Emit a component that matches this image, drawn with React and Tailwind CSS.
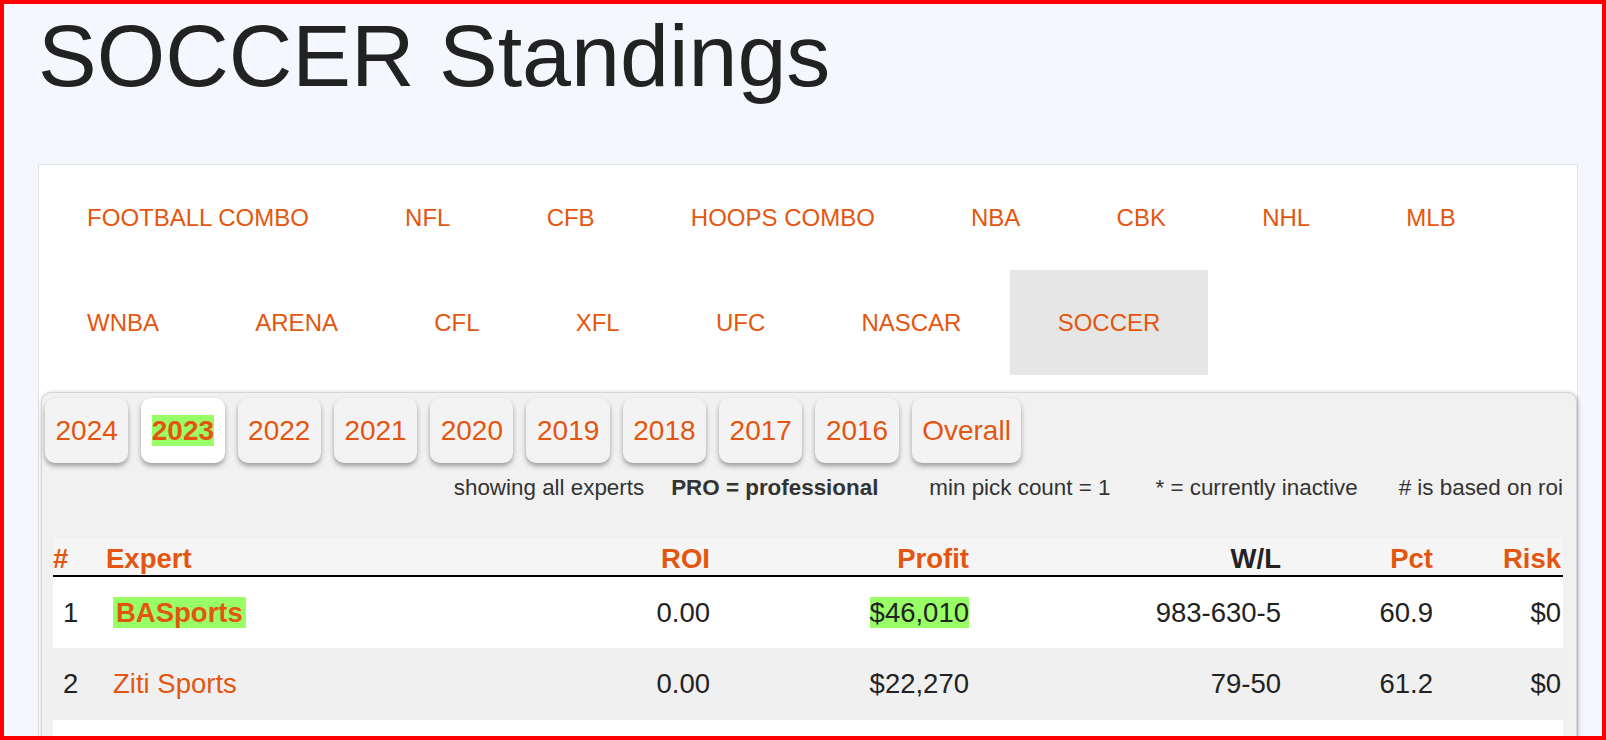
import React from "react";

const sports = [
  "FOOTBALL COMBO",
  "NFL",
  "CFB",
  "HOOPS COMBO",
  "NBA",
  "CBK",
  "NHL",
  "MLB",
  "WNBA",
  "ARENA",
  "CFL",
  "XFL",
  "UFC",
  "NASCAR",
  "SOCCER",
];

const years = ["2024", "2023", "2022", "2021", "2020", "2019", "2018", "2017", "2016", "Overall"];

const experts = [
  { rank: 1, name: "BASports", roi: "0.00", profit: "$46,010", wl: "983-630-5", pct: "60.9", risk: "$0", leader: true },
  { rank: 2, name: "Ziti Sports", roi: "0.00", profit: "$22,270", wl: "79-50", pct: "61.2", risk: "$0" },
];

const cols = "grid grid-cols-[51px_456px_150px_259px_312px_152px_129px]";

const App = () => {
  return (
    <div className="h-[740px] overflow-hidden border-4 border-[#ff0000] bg-[#f4f7fe] font-['Liberation_Sans',Arial,sans-serif] text-[#222]">
      {/* Title */}
      <h1 className="mt-[8px] ml-[34px] h-[88px] text-[88px] leading-[88px] font-normal">SOCCER Standings</h1>

      {/* Sports box */}
      <div className="mt-[64px] ml-[34px] w-[1540px] border border-[#e3e3e3] bg-white">
        <div className="flex flex-wrap pb-[17px]">
          {sports.map((s) => (
            <a
              key={s}
              className={`flex h-[105px] items-center px-[48.1px] text-[24px] text-[#e4560f] ${
                s === "SOCCER" ? "bg-[#e6e6e6]" : ""
              }`}
            >
              {s}
            </a>
          ))}
        </div>

        {/* Standings panel */}
        <div className="ml-[2px] rounded-t-[10px] border border-[#d6d6d6] bg-[#f1f1f1] pb-[40px] shadow-[1px_1px_4px_rgba(0,0,0,0.3)]">
          <div className="flex gap-[13px] pl-[3px] pt-[5px]">
            {years.map((y) => (
              <button
                key={y}
                className={`h-[65px] rounded-[10px] px-[10.5px] text-[28px] text-[#e4560f] shadow-[0_3px_5px_rgba(0,0,0,0.35)] ${
                  y === "2023" ? "bg-white font-bold" : "bg-[#f3f3f3]"
                }`}
              >
                {y === "2023" ? <span className="bg-[#99ff66]">{y}</span> : y}
              </button>
            ))}
          </div>

          {/* Legend */}
          <div className="mt-[12px] flex justify-end pr-[13px] text-[22.4px] leading-[25px] text-[#333]">
            <span>showing all experts</span>
            <span className="ml-[27px] font-bold">PRO = professional</span>
            <span className="ml-[51px]">min pick count = 1</span>
            <span className="ml-[45px]">* = currently inactive</span>
            <span className="ml-[41px]"># is based on roi</span>
          </div>

          {/* Table */}
          <div className="mt-[38px] ml-[11px] mr-[13px] text-[27.5px]">
            <div className={`${cols} h-[39px] items-center border-b-2 border-black bg-[#f5f5f5] font-bold text-[#e4560f]`}>
              <div>#</div>
              <div className="pl-[2px]">Expert</div>
              <div className="text-right">ROI</div>
              <div className="text-right">Profit</div>
              <div className="text-right text-[#222]">W/L</div>
              <div className="text-right">Pct</div>
              <div className="pr-[1px] text-right">Risk</div>
            </div>
            {experts.map((e, i) => (
              <div
                key={e.rank}
                className={`${cols} items-center ${i % 2 === 0 ? "h-[71px] bg-white" : "h-[72px] bg-[#f0f0f0]"}`}
              >
                <div className="pl-[10px]">{e.rank}</div>
                <div className="pl-[9px]">
                  {e.leader ? (
                    <span className="bg-[#99ff66] px-[3px] font-bold text-[#e4560f]">{e.name}</span>
                  ) : (
                    <span className="text-[#e4560f]">{e.name}</span>
                  )}
                </div>
                <div className="text-right">{e.roi}</div>
                <div className="text-right">
                  {e.leader ? <span className="bg-[#99ff66]">{e.profit}</span> : e.profit}
                </div>
                <div className="text-right">{e.wl}</div>
                <div className="text-right">{e.pct}</div>
                <div className="pr-[1px] text-right">{e.risk}</div>
              </div>
            ))}
            <div className="h-[72px] bg-white"></div>
          </div>
        </div>
      </div>
    </div>
  );
};

export default App;
